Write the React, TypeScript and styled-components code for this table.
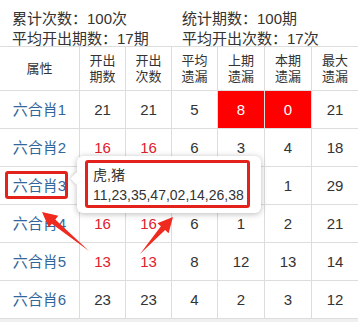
import React from "react";
import styled, { createGlobalStyle } from "styled-components";

const Global = createGlobalStyle`
  html, body { margin: 0; padding: 0; background: #f0f0f0; }
  body { font-family: "Liberation Sans", "Noto Sans CJK SC", sans-serif; }
`;

const Page = styled.div`
  position: relative;
  width: 358px;
  background: #fff;
  color: #333;
`;

const Info = styled.div`
  display: grid;
  grid-template-columns: 170px 1fr;
  padding: 9px 0 0 12px;
  height: 37px;
  font-size: 15px;
  line-height: 20px;
  color: #333;
`;

const Grid = styled.div`
  display: grid;
  grid-template-columns: 79px 46px 46px 46px 47px 47px 47px;
  border-top: 1px solid #ddd;
`;

const Cell = styled.div<{ $head?: boolean; $first?: boolean; $bg?: string; $color?: string }>`
  position: relative;
  height: ${(p) => (p.$head ? "43px" : "37px")};
  display: flex;
  align-items: center;
  justify-content: center;
  text-align: center;
  border-bottom: 1px solid #ddd;
  border-left: ${(p) => (p.$first ? "none" : "1px solid #ddd")};
  background: ${(p) => p.$bg || "transparent"};
  color: ${(p) => p.$color || "#333"};
  font-size: ${(p) => (p.$head ? "13px" : "15px")};
  line-height: ${(p) => (p.$head ? "16px" : "20px")};
`;

const Label = styled.span`
  color: #32679c;
  font-size: 15px;
`;

const Mark = styled.div`
  position: absolute;
  left: 5px;
  top: 4px;
  width: 57px;
  height: 22px;
  border: 3px solid #e3231b;
  border-radius: 3px;
`;

const Tip = styled.div`
  position: absolute;
  left: 77px;
  top: 156px;
  padding: 4px 11px 5px 8px;
  background: #fff;
  border-radius: 6px;
  box-shadow: 0 1px 6px rgba(0, 0, 0, 0.28);
  &::before {
    content: "";
    position: absolute;
    left: -5px;
    top: 18px;
    width: 9px;
    height: 9px;
    background: #fff;
    transform: rotate(45deg);
    box-shadow: -1px 1px 3px rgba(0, 0, 0, 0.15);
  }
`;

const TipBox = styled.div`
  position: relative;
  border: 3px solid #e3231b;
  border-radius: 3px;
  padding: 2px 3px 0 5px;
  font-size: 14px;
  line-height: 20px;
  color: #333;
  background: #fff;
`;

const TipLine = styled.div`
  height: 20px;
  white-space: nowrap;
`;

const Arrows = styled.svg`
  position: absolute;
  left: 0;
  top: 0;
  pointer-events: none;
`;

type Row = { name: string; v: number[]; red?: boolean };

const rows: Row[] = [
  { name: "六合肖1", v: [21, 21, 5, 8, 0, 21] },
  { name: "六合肖2", v: [16, 16, 6, 3, 4, 18], red: true },
  { name: "六合肖3", v: [16, 16, 6, 6, 1, 29], red: true },
  { name: "六合肖4", v: [16, 16, 6, 1, 2, 21], red: true },
  { name: "六合肖5", v: [13, 13, 8, 12, 13, 14], red: true },
  { name: "六合肖6", v: [23, 23, 4, 2, 3, 12] },
];

const heads = ["开出<br/>期数", "开出<br/>次数", "平均<br/>遗漏", "上期<br/>遗漏", "本期<br/>遗漏", "最大<br/>遗漏"];

function arrow(tx: number, ty: number, hx: number, hy: number) {
  const dx = hx - tx;
  const dy = hy - ty;
  const len = Math.hypot(dx, dy);
  const ux = dx / len;
  const uy = dy / len;
  const nx = -uy;
  const ny = ux;
  const headLen = 15;
  const bx = hx - ux * headLen;
  const by = hy - uy * headLen;
  const sw = 2.8;
  const hw = 7.5;
  const pts = [
    [tx, ty],
    [bx + nx * sw, by + ny * sw],
    [bx + nx * hw, by + ny * hw],
    [hx, hy],
    [bx - nx * hw, by - ny * hw],
    [bx - nx * sw, by - ny * sw],
  ];
  return pts.map((p) => p.map((n) => n.toFixed(1)).join(",")).join(" ");
}

export default function App() {
  return (
    <>
      <Global />
      <Page>
        <Info>
          <span>累计次数：100次</span>
          <span>统计期数：100期</span>
          <span>平均开出期数：17期</span>
          <span>平均开出次数：17次</span>
        </Info>
        <Grid>
          <Cell $head $first>属性</Cell>
          {heads.map((h) => (
            <Cell $head key={h} dangerouslySetInnerHTML={{ __html: h }} />
          ))}
          {rows.map((r, i) => (
            <React.Fragment key={r.name}>
              <Cell $first>
                <Label>{r.name}</Label>
                {i === 2 && <Mark />}
              </Cell>
              {r.v.map((n, j) => {
                const redBg = i === 0 && (j === 3 || j === 4);
                return (
                  <Cell
                    key={j}
                    $bg={redBg ? "#ff0000" : undefined}
                    $color={redBg ? "#fff" : r.red && j < 2 ? "#e0202c" : undefined}
                  >
                    {n}
                  </Cell>
                );
              })}
            </React.Fragment>
          ))}
        </Grid>
        <Tip>
          <TipBox>
            <TipLine>虎,猪</TipLine>
            <TipLine>11,23,35,47,02,14,26,38</TipLine>
          </TipBox>
        </Tip>
        <Arrows width="358" height="322" viewBox="0 0 358 322">
          <polygon points={arrow(89, 251, 42, 212)} fill="#ef2a1e" />
          <polygon points={arrow(140, 254, 173, 217)} fill="#ef2a1e" />
        </Arrows>
      </Page>
    </>
  );
}
